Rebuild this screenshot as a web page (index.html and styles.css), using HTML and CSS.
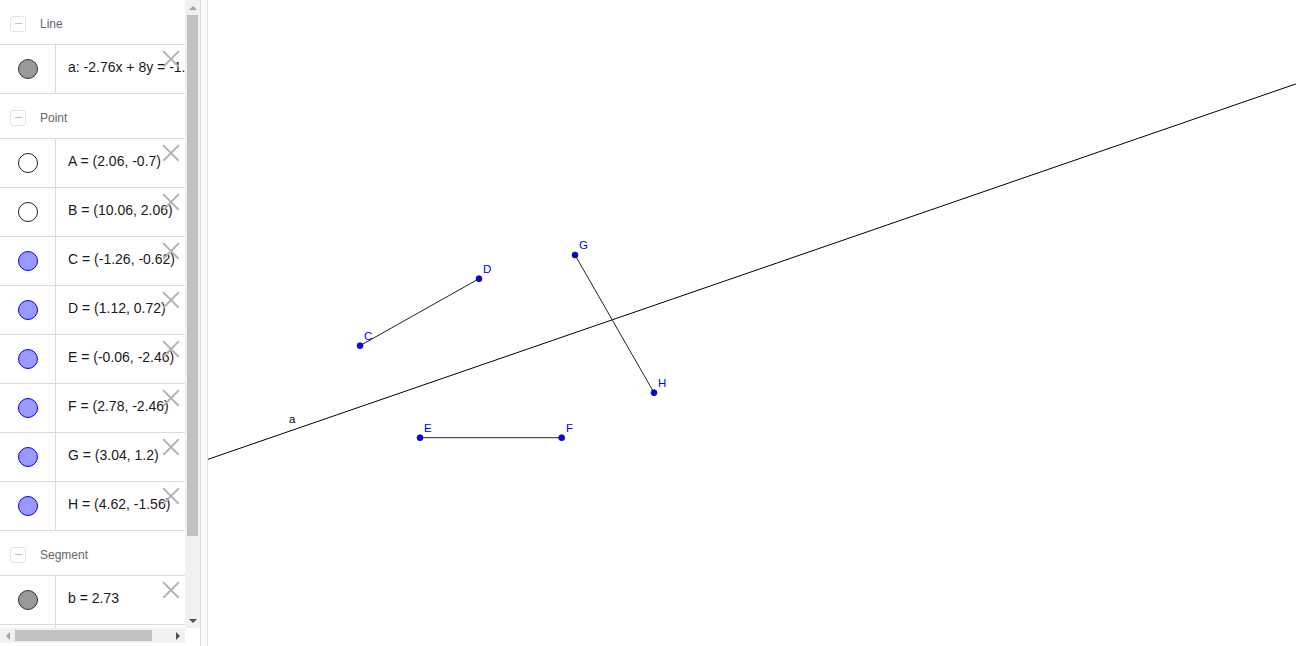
FILE: index.html
```html
<!DOCTYPE html>
<html>
<head>
<meta charset="utf-8">
<link rel="stylesheet" href="styles.css">
</head>
<body>
<div class="app">
  <div class="algebra">
    <div class="list">
      <div class="group"><span class="minus"></span><span class="gname">Line</span></div>
      <div class="row"><div class="marker"><span class="dot dot-grey"></span></div><div class="expr">a: -2.76x + 8y = -1.78</div><span class="del"></span></div>
      <div class="group"><span class="minus"></span><span class="gname">Point</span></div>
      <div class="row"><div class="marker"><span class="dot dot-white"></span></div><div class="expr">A = (2.06, -0.7)</div><span class="del"></span></div>
      <div class="row"><div class="marker"><span class="dot dot-white"></span></div><div class="expr">B = (10.06, 2.06)</div><span class="del"></span></div>
      <div class="row"><div class="marker"><span class="dot dot-blue"></span></div><div class="expr">C = (-1.26, -0.62)</div><span class="del"></span></div>
      <div class="row"><div class="marker"><span class="dot dot-blue"></span></div><div class="expr">D = (1.12, 0.72)</div><span class="del"></span></div>
      <div class="row"><div class="marker"><span class="dot dot-blue"></span></div><div class="expr">E = (-0.06, -2.46)</div><span class="del"></span></div>
      <div class="row"><div class="marker"><span class="dot dot-blue"></span></div><div class="expr">F = (2.78, -2.46)</div><span class="del"></span></div>
      <div class="row"><div class="marker"><span class="dot dot-blue"></span></div><div class="expr">G = (3.04, 1.2)</div><span class="del"></span></div>
      <div class="row"><div class="marker"><span class="dot dot-blue"></span></div><div class="expr">H = (4.62, -1.56)</div><span class="del"></span></div>
      <div class="group"><span class="minus"></span><span class="gname">Segment</span></div>
      <div class="row"><div class="marker"><span class="dot dot-grey"></span></div><div class="expr">b = 2.73</div><span class="del"></span></div>
      <div class="row"><div class="marker"></div><div class="expr"></div></div>
    </div>
    <div class="vscroll">
      <div class="arrow"><span class="tri-up"></span></div>
      <div class="vtrack"><div class="vthumb"></div></div>
      <div class="arrow"><span class="tri-down"></span></div>
    </div>
    <div class="hscroll">
      <div class="harrow"><span class="tri-left"></span></div>
      <div class="htrack"><div class="hthumb"></div></div>
      <div class="harrow"><span class="tri-right"></span></div>
    </div>
    <div class="corner"></div>
  </div>
  <div class="divider"></div>
  <div class="graphics">
    <svg class="canvas" viewBox="208 0 1088 646" width="1088" height="646">
      <line x1="208" y1="459.3" x2="1296" y2="83.9" stroke="#000" stroke-width="1"/>
      <line x1="360" y1="345.7" x2="479" y2="278.7" stroke="#222" stroke-width="1"/>
      <line x1="575" y1="255" x2="654" y2="392.7" stroke="#222" stroke-width="1"/>
      <line x1="420" y1="437.7" x2="561.7" y2="437.7" stroke="#222" stroke-width="1"/>
      <g fill="#0000ff" stroke="#1a1a40" stroke-width="0.8">
        <circle cx="360" cy="345.7" r="3"/>
        <circle cx="479" cy="278.7" r="3"/>
        <circle cx="575" cy="255" r="3"/>
        <circle cx="654" cy="392.7" r="3"/>
        <circle cx="420" cy="437.7" r="3"/>
        <circle cx="561.7" cy="437.7" r="3"/>
      </g>
      <g class="lbl">
        <text x="364" y="340">C</text>
        <text x="483" y="273">D</text>
        <text x="579" y="249">G</text>
        <text x="658" y="387">H</text>
        <text x="424" y="432">E</text>
        <text x="566" y="432">F</text>
      </g>
      <text class="lbl-a" x="289" y="423">a</text>
    </svg>
  </div>
</div>
</body>
</html>
```

FILE: styles.css
```css
html, body {
  margin: 0;
  padding: 0;
  background: #fff;
}
body {
  font-family: "Liberation Sans", Arial, sans-serif;
  width: 1296px;
  height: 646px;
  overflow: hidden;
}
.app {
  display: flex;
  width: 1296px;
  height: 646px;
}
.algebra {
  width: 200px;
  flex: none;
  display: grid;
  grid-template-columns: 185px 15px;
  grid-template-rows: 628px 15px;
  align-content: start;
}
.list {
  overflow: hidden;
  position: relative;
}
.group {
  height: 44px;
  box-sizing: content-box;
  padding-top: 0;
  border-bottom: 1px solid #dcdcdc;
  display: flex;
  align-items: center;
}
.group > * {
  position: relative;
  top: 2px;
}
.minus {
  width: 14px;
  height: 14px;
  margin-left: 10px;
  border: 1px solid #e3e3e3;
  border-radius: 3px;
  box-sizing: content-box;
}
.minus::after {
  content: "";
  position: absolute;
  left: 4px;
  top: 6px;
  width: 7px;
  height: 1px;
  background: #bdbdbd;
}
.gname {
  margin-left: 14px;
  font-size: 12px;
  color: #666;
}
.row {
  height: 48px;
  border-bottom: 1px solid #dcdcdc;
  display: flex;
  position: relative;
}
.marker {
  width: 56px;
  flex: none;
  display: flex;
  align-items: center;
  justify-content: center;
  border-right: 1px solid #dcdcdc;
  box-sizing: border-box;
}
.dot {
  width: 20px;
  height: 20px;
  border-radius: 50%;
  box-sizing: border-box;
  border: 1px solid #333;
  margin-top: -1px;
}
.dot-grey { background: #999; border-color: #333; }
.dot-white { background: #fff; border-color: #222; }
.dot-blue { background: #9999ff; border-color: #0000ff; }
.expr {
  padding-left: 12px;
  padding-bottom: 4px;
  box-sizing: border-box;
  font-size: 14px;
  color: #1a1a1a;
  white-space: nowrap;
  display: flex;
  align-items: center;
  flex: 1;
  overflow: hidden;
}
.del {
  position: absolute;
  left: 163px;
  top: 6px;
  width: 16px;
  height: 16px;
}
.del::before, .del::after {
  content: "";
  position: absolute;
  left: -3px;
  top: 7px;
  width: 22px;
  height: 1.6px;
  background: #b3b3b3;
  transform: rotate(45deg);
}
.del::after {
  transform: rotate(-45deg);
}
.vscroll {
  background: #f1f1f1;
  display: flex;
  flex-direction: column;
}
.arrow {
  height: 15px;
  flex: none;
  display: flex;
  align-items: center;
  justify-content: center;
}
.tri-up {
  width: 0; height: 0;
  border-left: 4px solid transparent;
  border-right: 4px solid transparent;
  border-bottom: 4px solid #a3a3a3;
}
.tri-down {
  width: 0; height: 0;
  border-left: 4px solid transparent;
  border-right: 4px solid transparent;
  border-top: 4px solid #505050;
}
.vtrack {
  flex: 1;
  padding: 0 2px;
}
.vthumb {
  height: 521px;
  background: #c1c1c1;
}
.hscroll {
  background: #f1f1f1;
  display: flex;
  align-items: stretch;
}
.harrow {
  width: 15px;
  flex: none;
  display: flex;
  align-items: center;
  justify-content: center;
}
.tri-left {
  width: 0; height: 0;
  border-top: 4px solid transparent;
  border-bottom: 4px solid transparent;
  border-right: 4px solid #a3a3a3;
}
.tri-right {
  width: 0; height: 0;
  border-top: 4px solid transparent;
  border-bottom: 4px solid transparent;
  border-left: 4px solid #505050;
}
.htrack {
  flex: 1;
  padding: 2px 0;
}
.hthumb {
  width: 137px;
  height: 100%;
  background: #c1c1c1;
}
.corner {
  background: #fff;
}
.divider {
  width: 8px;
  flex: none;
  box-sizing: border-box;
  border-left: 1px solid #dedede;
  border-right: 1px solid #e6e6e6;
  background: #fbfbfb;
}
.graphics {
  flex: 1;
  position: relative;
  overflow: hidden;
}
.canvas {
  display: block;
}
.lbl text {
  font-family: "Liberation Sans", Arial, sans-serif;
  font-size: 11.5px;
  fill: #0000ff;
}
.lbl-a {
  font-family: "Liberation Sans", Arial, sans-serif;
  font-size: 11.5px;
  fill: #000;
}
```
